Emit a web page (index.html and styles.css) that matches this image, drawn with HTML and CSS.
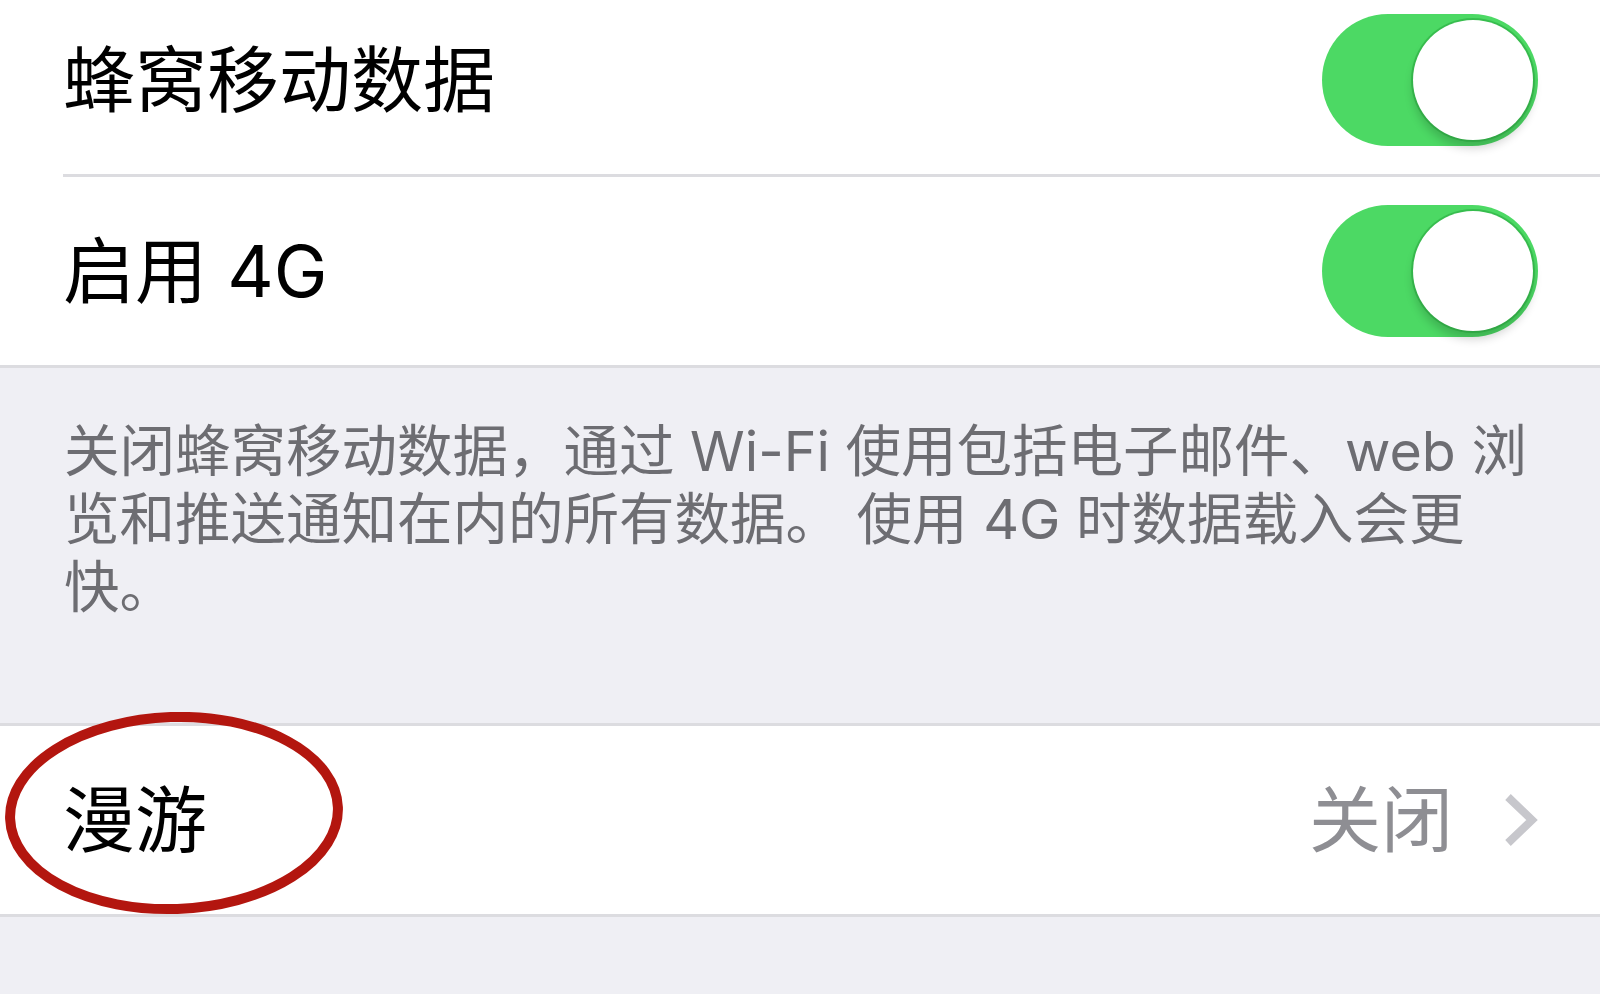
FILE: index.html
```html
<!DOCTYPE html>
<html lang="zh-CN">
<head>
    <meta charset="UTF-8">
    <meta name="viewport" content="width=device-width, initial-scale=1.0">
    <title>蜂窝移动网络</title>
    <link rel="stylesheet" href="styles.css">
</head>
<body>
    <div class="settings">
        <div class="group group-top">
            <div class="cell">
                <div class="cell-inner">
                    <span class="cell-title">蜂窝移动数据</span>
                    <div class="switch on"><div class="knob"></div></div>
                </div>
            </div>
            <div class="cell">
                <div class="cell-inner">
                    <span class="cell-title">启用 4G</span>
                    <div class="switch on"><div class="knob"></div></div>
                </div>
            </div>
        </div>

        <p class="group-footer">关闭蜂窝移动数据，通过 Wi-Fi 使用包括电子邮件、web 浏<br>览和推送通知在内的所有数据。 使用 4G 时数据载入会更<br>快。</p>

        <div class="group">
            <div class="cell cell-link">
                <div class="cell-inner">
                    <span class="cell-title">漫游</span>
                    <span class="cell-value">关闭</span>
                    <svg class="chevron" width="35" height="56" viewBox="0 0 35 56">
                        <polyline points="5,5 29,28 5,51" fill="none" stroke="#c7c7cc" stroke-width="8" stroke-linejoin="miter"/>
                    </svg>
                </div>
                <!-- annotation circle drawn over the row -->
                <svg class="mark" width="360" height="220" viewBox="0 0 360 220">
                    <ellipse cx="174" cy="101" rx="164" ry="96" fill="none" stroke="#b3160f" stroke-width="10" transform="rotate(-2 174 101)"/>
                </svg>
            </div>
        </div>
    </div>
</body>
</html>
```

FILE: styles.css
```css
body {
    margin: 0;
    height: 994px;
    overflow: hidden;
    background-color: #efeff4;
    font-family: "Inter", "Noto Sans CJK SC", sans-serif;
    color: #000;
}

.group {
    background-color: #fff;
    border-top: 3px solid #dcdce0;
    border-bottom: 3px solid #dcdce0;
}

.group-top {
    border-top: none;
    margin-top: -14px;
}

.cell {
    position: relative;
    padding-left: 63px;
}

.cell-inner {
    display: flex;
    align-items: center;
    height: 188px;
    padding-right: 62px;
    border-bottom: 3px solid #dcdce0;
}

.cell:last-child .cell-inner {
    border-bottom: none;
}

.cell-title {
    flex: 1;
    font-size: 72px;
    line-height: 1;
}

.cell-value {
    font-size: 72px;
    line-height: 1;
    color: #8e8e93;
    margin-right: 50px;
}

.chevron {
    display: block;
}

/* switch */
.switch {
    width: 216px;
    height: 132px;
    border-radius: 66px;
    box-sizing: border-box;
    padding: 6px 5px 6px 6px;
    display: flex;
    justify-content: flex-end;
    background-color: #e5e5ea;
}

.switch.on {
    background-color: #4cd964;
}

.knob {
    width: 120px;
    height: 120px;
    border-radius: 50%;
    background-color: #fff;
    box-shadow: 0 0 0 2px rgba(20, 140, 40, 0.35), 0 8px 10px rgba(0, 0, 0, 0.18);
}

.group-footer {
    margin: 0;
    padding: 49px 40px 102px 64px;
    font-size: 55.5px;
    line-height: 68px;
    color: #6d6d72;
    white-space: nowrap;
}

.mark {
    position: absolute;
    left: 0;
    top: -14px;
    pointer-events: none;
}
```
